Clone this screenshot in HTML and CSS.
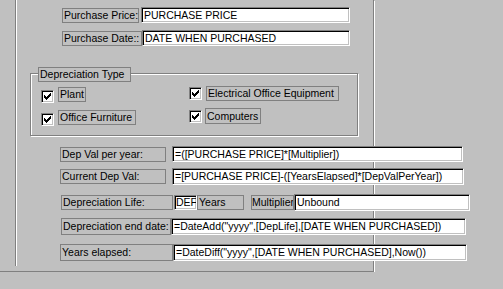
FILE: index.html
```html
<!DOCTYPE html>
<html lang="en">
<head>
    <meta charset="UTF-8">
    <title>Depreciation</title>
    <link rel="stylesheet" href="styles.css">
</head>
<body>

    <div class="canvas">
        <div class="row row-price">
            <span class="lbl lbl-price">Purchase Price:</span>
            <span class="txt txt-price">PURCHASE PRICE</span>
        </div>
        <div class="row row-date">
            <span class="lbl lbl-date">Purchase Date::</span>
            <span class="txt txt-date">DATE WHEN PURCHASED</span>
        </div>

        <!-- Groupe des types -->
        <div class="group">
            <span class="lbl legend">Depreciation Type</span>
            <div class="checks">
                <div class="col col-left">
                    <div class="opt opt-plant">
                        <span class="check"><svg width="7" height="7" viewBox="0 0 7 7"><path d="M0 2h1v3H0zM1 3h1v3H1zM2 4h1v3H2zM3 3h1v3H3zM4 2h1v3H4zM5 1h1v3H5zM6 0h1v3H6z" fill="#000"/></svg></span>
                        <span class="lbl lbl-plant">Plant</span>
                    </div>
                    <div class="opt opt-furn">
                        <span class="check"><svg width="7" height="7" viewBox="0 0 7 7"><path d="M0 2h1v3H0zM1 3h1v3H1zM2 4h1v3H2zM3 3h1v3H3zM4 2h1v3H4zM5 1h1v3H5zM6 0h1v3H6z" fill="#000"/></svg></span>
                        <span class="lbl lbl-furn">Office Furniture</span>
                    </div>
                </div>
                <div class="col col-right">
                    <div class="opt opt-elec">
                        <span class="check"><svg width="7" height="7" viewBox="0 0 7 7"><path d="M0 2h1v3H0zM1 3h1v3H1zM2 4h1v3H2zM3 3h1v3H3zM4 2h1v3H4zM5 1h1v3H5zM6 0h1v3H6z" fill="#000"/></svg></span>
                        <span class="lbl lbl-elec">Electrical Office Equipment</span>
                    </div>
                    <div class="opt opt-comp">
                        <span class="check"><svg width="7" height="7" viewBox="0 0 7 7"><path d="M0 2h1v3H0zM1 3h1v3H1zM2 4h1v3H2zM3 3h1v3H3zM4 2h1v3H4zM5 1h1v3H5zM6 0h1v3H6z" fill="#000"/></svg></span>
                        <span class="lbl lbl-comp">Computers</span>
                    </div>
                </div>
            </div>
        </div>

        <div class="row row-dep">
            <span class="lbl lbl-dep">Dep Val per year:</span>
            <span class="txt txt-dep">=([PURCHASE PRICE]*[Multiplier])</span>
        </div>
        <div class="row row-cur">
            <span class="lbl lbl-cur">Current Dep Val:</span>
            <span class="txt txt-cur">=[PURCHASE PRICE]-([YearsElapsed]*[DepValPerYear])</span>
        </div>
        <div class="row row-life">
            <span class="lbl lbl-life">Depreciation Life:</span>
            <span class="txt txt-def">DEF</span>
            <span class="lbl lbl-years">Years</span>
            <span class="lbl lbl-mult">Multiplier</span>
            <span class="txt txt-unb">Unbound</span>
        </div>
        <div class="row row-end">
            <span class="lbl lbl-end">Depreciation end date:</span>
            <span class="txt txt-end">=DateAdd("yyyy",[DepLife],[DATE WHEN PURCHASED])</span>
        </div>
        <div class="row row-elapsed">
            <span class="lbl lbl-elapsed">Years elapsed:</span>
            <span class="txt txt-elapsed">=DateDiff("yyyy",[DATE WHEN PURCHASED],Now())</span>
        </div>
    </div>

</body>
</html>
```

FILE: styles.css
```css
body {
    margin: 0;
    background-color: #c0c0c0;
    font-family: "Liberation Sans", Arial, sans-serif;
    font-size: 10.5px;
    color: #000;
}
.canvas {
    position: relative;
    display: flex;
    flex-direction: column;
    box-sizing: border-box;
    width: 374px;
    height: 272px;
    border-right: 1px solid #808080;
    border-bottom: 1px solid #808080;
    box-shadow: 1px 1px 0 #fff;
}
/* trait vertical de gauche */
.canvas::before {
    content: "";
    position: absolute;
    left: 15px;
    top: 0;
    width: 1px;
    height: 266px;
    background-color: #808080;
    box-shadow: 1px 0 0 #fff;
}
.row {
    display: flex;
    align-items: flex-start;
}
.lbl {
    display: block;
    flex-shrink: 0;
    box-sizing: border-box;
    height: 15px;
    border: 1px solid #808080;
    padding-left: 1px;
    line-height: 13px;
    white-space: nowrap;
    overflow: hidden;
    background-color: #c0c0c0;
}
.txt {
    display: block;
    flex-shrink: 0;
    box-sizing: border-box;
    height: 16px;
    border: 1px solid;
    border-color: #808080 #fff #fff #808080;
    box-shadow: inset 1px 1px 0 #000, inset -1px -1px 0 #c0c0c0;
    background-color: #fff;
    padding-left: 2px;
    line-height: 14px;
    white-space: nowrap;
    overflow: hidden;
}

.row-price { margin-top: 7px; }
.lbl-price { margin: 1px 0 0 62px; width: 77px; }
.txt-price { margin-left: 2px; width: 209px; }
.row-date { margin-top: 7px; }
.lbl-date { margin: 1px 0 0 62px; width: 80px; }
.txt-date { width: 208px; }

.group {
    display: flex;
    flex-direction: column;
    flex-shrink: 0;
    box-sizing: border-box;
    margin: 27px 0 0 30px;
    width: 328px;
    height: 63px;
    border: 1px solid #808080;
    box-shadow: inset 1px 1px 0 #fff, 1px 1px 0 #fff;
}
.legend {
    align-self: flex-start;
    margin: -7px 0 0 7px;
    width: 93px;
}
.checks {
    display: flex;
    margin: 4px 0 0 10px;
}
.col-left { width: 148px; flex-shrink: 0; }
.opt {
    display: flex;
    align-items: flex-start;
}
.check {
    display: flex;
    flex-shrink: 0;
    align-items: center;
    justify-content: center;
    box-sizing: border-box;
    width: 13px;
    height: 13px;
    margin-right: 4px;
    border: 1px solid;
    border-color: #808080 #fff #fff #808080;
    box-shadow: inset 1px 1px 0 #000, inset -1px -1px 0 #c0c0c0;
    background-color: #fff;
}
.opt-plant { margin-top: 1px; }
.opt-plant .check { margin-top: 3px; }
.lbl-plant { width: 28px; }
.opt-furn { margin-top: 7px; }
.opt-furn .check { margin-top: 3px; }
.lbl-furn { width: 78px; }
.opt-elec .check { margin-top: 1px; }
.lbl-elec { width: 133px; }
.opt-comp { margin-top: 7px; }
.opt-comp .check { margin: 2px 3px 0 0; }
.lbl-comp { width: 56px; height: 16px; line-height: 14px; }

.row-dep { margin-top: 10px; }
.lbl-dep { margin: 1px 0 0 60px; width: 106px; }
.txt-dep { margin-left: 6px; width: 291px; }
.row-cur { margin-top: 6px; }
.lbl-cur { margin: 1px 0 0 60px; width: 106px; }
.txt-cur { margin-left: 6px; width: 292px; height: 17px; line-height: 15px; }

.row-life { margin-top: 9px; }
.lbl-life { margin: 1px 0 0 61px; width: 112px; }
.txt-def { margin: 1px 0 0 1px; width: 23px; height: 15px; line-height: 13px; padding-left: 1px; }
.lbl-years { margin-top: 1px; width: 47px; }
.lbl-mult { margin: 1px 0 0 7px; width: 43px; padding-left: 0; }
.txt-unb { width: 176px; height: 17px; line-height: 15px; }

.row-end { margin-top: 7px; }
.lbl-end { margin-left: 61px; width: 110px; height: 17px; line-height: 15px; }
.txt-end { width: 295px; height: 17px; line-height: 15px; }
.row-elapsed { margin-top: 9px; }
.lbl-elapsed { margin-left: 60px; width: 113px; height: 17px; line-height: 15px; }
.txt-elapsed { width: 294px; height: 17px; line-height: 15px; }
```
